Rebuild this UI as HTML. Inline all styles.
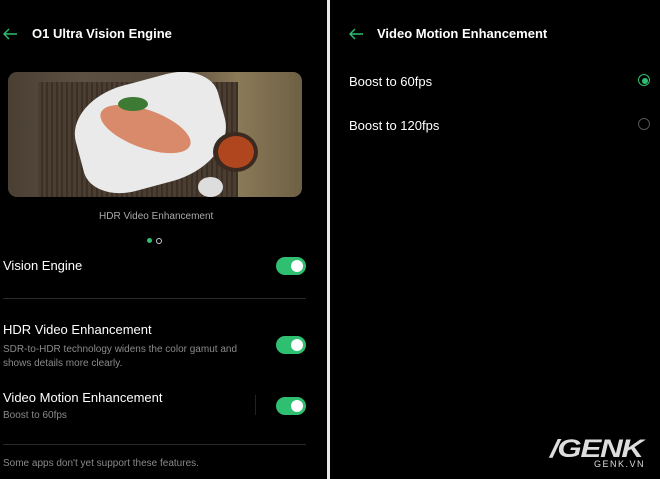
<!DOCTYPE html>
<html><head><style>
body{margin:0;width:660px;height:479px;background:#000;position:relative;overflow:hidden;font-family:"Liberation Sans",sans-serif;color:#fff}
.a{position:absolute;white-space:nowrap}
.tog{position:absolute;width:30px;height:18px;border-radius:9px;background:#2fbf71}
.tog:after{content:"";position:absolute;right:3px;top:3px;width:12px;height:12px;border-radius:50%;background:#fff}
.sub{color:#8a8a8a;font-size:10px}
</style></head><body>
<div style="position:absolute;left:327px;top:0;width:3px;height:479px;background:#e8e8e8"></div>
<svg class="a" style="left:2px;top:28px" width="16" height="12"><path d="M15 6H2M7 1L2 6l5 5" stroke="#2fbf71" stroke-width="1.4" fill="none"/></svg>
<div class="a" style="left:32px;top:26px;font-size:13px;font-weight:bold">O1 Ultra Vision Engine</div>
<div style="position:absolute;left:8px;top:72px;width:294px;height:125px;border-radius:9px;overflow:hidden;background:linear-gradient(90deg,#4a3f33 0%,#5c5042 25%,#54483a 55%,#8a7a58 78%,#6e6044 100%)">
<div style="position:absolute;left:30px;top:10px;width:200px;height:115px;background:repeating-linear-gradient(90deg,#4b3e31 0 3px,#3a3027 3px 5px)"></div>
<div style="position:absolute;left:68px;top:8px;width:150px;height:105px;background:#eaeaea;border-radius:40% 30% 45% 30%;transform:rotate(-15deg)"></div>
<div style="position:absolute;left:90px;top:38px;width:95px;height:38px;background:#d98a6a;border-radius:50%;transform:rotate(20deg)"></div>
<div style="position:absolute;left:110px;top:25px;width:30px;height:14px;background:#3d7a33;border-radius:50%"></div>
<div style="position:absolute;left:205px;top:60px;width:45px;height:40px;background:#3a2a20;border-radius:50%"></div>
<div style="position:absolute;left:210px;top:64px;width:36px;height:32px;background:#b0461d;border-radius:50%"></div>
<div style="position:absolute;left:190px;top:105px;width:25px;height:20px;background:#ddd;border-radius:50%"></div>
</div>
<div class="a sub" style="left:99px;top:211px;color:#aaa;font-size:10px">HDR Video Enhancement</div>
<div class="a" style="left:147px;top:238px;width:5px;height:5px;border-radius:50%;background:#2fbf71"></div>
<div class="a" style="left:156px;top:238px;width:4px;height:4px;border-radius:50%;border:1px solid #ccc"></div>
<div class="a" style="left:3px;top:258px;font-size:13px">Vision Engine</div>
<div class="tog" style="left:276px;top:257px"></div>
<div class="a" style="left:3px;top:298px;width:303px;height:1px;background:#2a2a2a"></div>
<div class="a" style="left:3px;top:322px;font-size:13px">HDR Video Enhancement</div>
<div class="a sub" style="left:3px;top:343px;line-height:14px">SDR-to-HDR technology widens the color gamut and<br>shows details more clearly.</div>
<div class="tog" style="left:276px;top:336px"></div>
<div class="a" style="left:3px;top:390px;font-size:13px">Video Motion Enhancement</div>
<div class="a sub" style="left:3px;top:410px">Boost to 60fps</div>
<div class="a" style="left:255px;top:395px;width:1px;height:20px;background:#222"></div>
<div class="tog" style="left:276px;top:397px"></div>
<div class="a" style="left:3px;top:444px;width:303px;height:1px;background:#2a2a2a"></div>
<div class="a sub" style="left:3px;top:458px">Some apps don't yet support these features.</div>
<svg class="a" style="left:348px;top:28px" width="16" height="12"><path d="M15 6H2M7 1L2 6l5 5" stroke="#2fbf71" stroke-width="1.4" fill="none"/></svg>
<div class="a" style="left:377px;top:26px;font-size:13px;font-weight:bold">Video Motion Enhancement</div>
<div class="a" style="left:349px;top:74px;font-size:13px">Boost to 60fps</div>
<div class="a" style="left:638px;top:74px;width:10px;height:10px;border:1.5px solid #2fbf71;border-radius:50%"></div>
<div class="a" style="left:641.5px;top:77.5px;width:6px;height:6px;background:#2fbf71;border-radius:50%"></div>
<div class="a" style="left:349px;top:118px;font-size:13px">Boost to 120fps</div>
<div class="a" style="left:638px;top:118px;width:10px;height:10px;border:1.5px solid #555;border-radius:50%"></div>
<div class="a" style="left:550px;top:435px;font-size:25px;font-weight:bold;font-style:italic;color:#ddd;letter-spacing:-1px;transform:scaleX(1.25);transform-origin:left">/GENK</div>
<div class="a" style="left:594px;top:459px;font-size:9px;color:#ddd;letter-spacing:1.5px">GENK.VN</div>
</body></html>
